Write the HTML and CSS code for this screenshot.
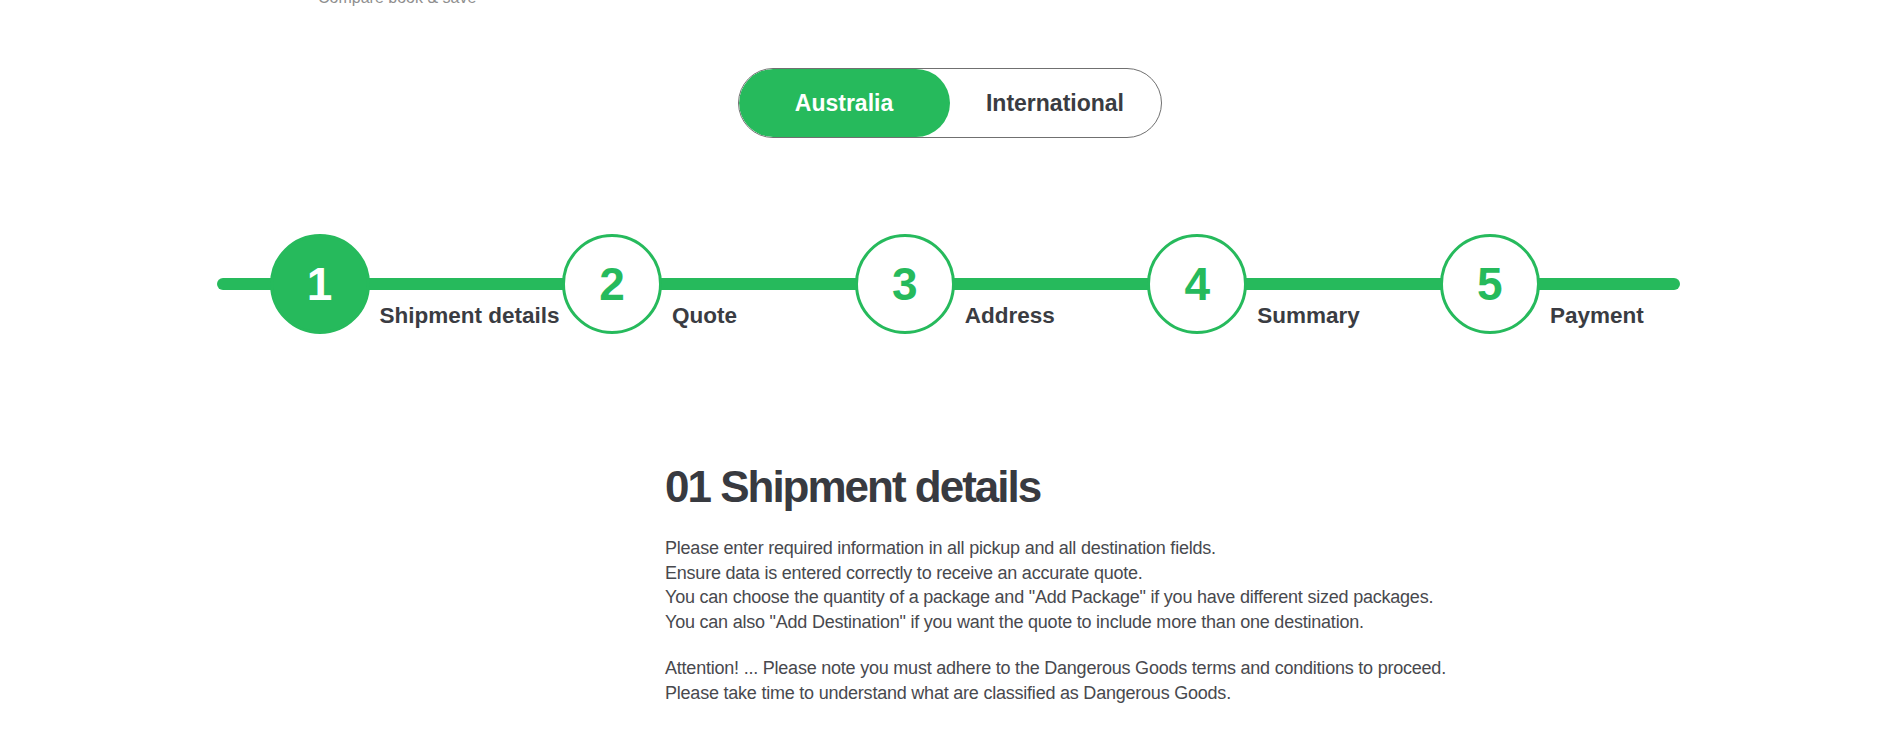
FILE: index.html
```html
<!DOCTYPE html>
<html lang="en">
<head>
<meta charset="utf-8">
<title>Shipment details</title>
<link rel="stylesheet" href="styles.css">
</head>
<body>
<header class="site-header">
  <div class="tagline">Compare book &amp; save</div>
</header>

<main>
  <div class="toggle-wrap">
    <div class="toggle">
      <button class="toggle-btn active">Australia</button>
      <button class="toggle-btn">International</button>
    </div>
  </div>

  <ol class="stepper">
    <li class="step current"><span class="step-num">1</span><span class="step-label">Shipment details</span></li>
    <li class="step"><span class="step-num">2</span><span class="step-label">Quote</span></li>
    <li class="step"><span class="step-num">3</span><span class="step-label">Address</span></li>
    <li class="step"><span class="step-num">4</span><span class="step-label">Summary</span></li>
    <li class="step"><span class="step-num">5</span><span class="step-label">Payment</span></li>
  </ol>

  <section class="details">
    <h1 class="details-title">01 Shipment details</h1>
    <p class="details-text">Please enter required information in all pickup and all destination fields.<br>
Ensure data is entered correctly to receive an accurate quote.<br>
You can choose the quantity of a package and "Add Package" if you have different sized packages.<br>
You can also "Add Destination" if you want the quote to include more than one destination.</p>
    <p class="details-text">Attention! ... Please note you must adhere to the Dangerous Goods terms and conditions to proceed.<br>
Please take time to understand what are classified as Dangerous Goods.</p>
  </section>
</main>
</body>
</html>
```

FILE: styles.css
```css
* { box-sizing: border-box; }

html, body {
  margin: 0;
  padding: 0;
  background: #ffffff;
  font-family: "Liberation Sans", Arial, Helvetica, sans-serif;
  color: #3a3c42;
  overflow: hidden;
}

.site-header {
  display: flow-root;
  height: 0;
  padding-left: 318px;
}

.tagline {
  margin-top: -11px;
  font-size: 16px;
  line-height: 18px;
  color: #8f8f8f;
}

.toggle-wrap {
  display: flex;
  justify-content: center;
  padding-top: 68px;
}

.toggle {
  display: flex;
  width: 424px;
  height: 70px;
  border: 1px solid #707070;
  border-radius: 35px;
  overflow: hidden;
  margin-left: 3px;
}

.toggle-btn {
  flex: 1 1 0;
  border: 0;
  margin: 0;
  padding: 0;
  background: transparent;
  font-family: "Liberation Sans", Arial, Helvetica, sans-serif;
  font-weight: 700;
  font-size: 23px;
  color: #3a3c42;
  border-radius: 35px;
  cursor: pointer;
}

.toggle-btn.active {
  background: #26ba5c;
  color: #ffffff;
}

.stepper {
  position: relative;
  display: flex;
  width: 1463px;
  margin: 96px auto 0;
  padding: 0;
  list-style: none;
}

.stepper::before {
  content: "";
  position: absolute;
  left: 0;
  right: 0;
  top: 44px;
  height: 12px;
  border-radius: 6px;
  background: #26ba5c;
}

.step {
  position: relative;
  flex: 1 1 0;
  min-width: 0;
  display: flex;
  align-items: flex-start;
  padding-left: 53px;
}

.step-num {
  flex: none;
  width: 100px;
  height: 100px;
  border-radius: 50%;
  border: 3px solid #26ba5c;
  background: #ffffff;
  color: #26ba5c;
  display: flex;
  align-items: center;
  justify-content: center;
  font-weight: 700;
  font-size: 46px;
  line-height: 1;
}

.step.current .step-num {
  background: #26ba5c;
  color: #ffffff;
}

.step-label {
  margin-top: 69px;
  margin-left: 10px;
  font-weight: 700;
  font-size: 22.5px;
  line-height: 26px;
  color: #3a3c42;
  white-space: nowrap;
}

.details {
  padding-left: 665px;
  margin-top: 129px;
}

.details-title {
  margin: 0 0 25px;
  font-size: 44px;
  line-height: 48px;
  font-weight: 700;
  letter-spacing: -2px;
  color: #383a40;
}

.details-text {
  margin: 0 0 22px;
  font-size: 18px;
  line-height: 24.6px;
  letter-spacing: -0.22px;
  color: #48494e;
}
```
